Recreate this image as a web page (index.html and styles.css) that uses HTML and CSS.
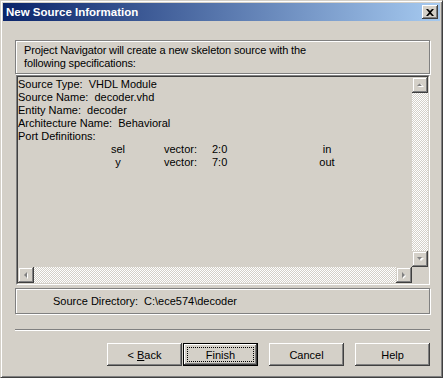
FILE: index.html
```html
<!DOCTYPE html>
<html>
<head>
<meta charset="utf-8">
<link rel="stylesheet" href="styles.css">
</head>
<body>
<div class="window">
  <div class="titlebar">
    <span class="title">New Source Information</span>
    <span class="close"><svg width="8" height="7" viewBox="0 0 8 7"><path d="M0 0h2l2 2 2-2h2L5 3.5 8 7H6L4 5 2 7H0l3-3.5z" fill="#000"/></svg></span>
  </div>
  <div class="content">
    <div class="etched intro">
      <p>Project Navigator will create a new skeleton source with the</p>
      <p>following specifications:</p>
    </div>
    <div class="listbox">
      <div class="listinner">
        <div class="text">
          <p>Source Type:&nbsp; VHDL Module</p>
          <p>Source Name:&nbsp; decoder.vhd</p>
          <p>Entity Name:&nbsp; decoder</p>
          <p>Architecture Name:&nbsp; Behavioral</p>
          <p>Port Definitions:</p>
          <div class="port"><span class="pname">sel</span><span class="ptype">vector:</span><span class="prange">2:0</span><span class="pdir">in</span></div>
          <div class="port"><span class="pname">y</span><span class="ptype">vector:</span><span class="prange">7:0</span><span class="pdir">out</span></div>
        </div>
        <div class="vscroll">
          <span class="sbtn"><svg width="7" height="5" viewBox="0 0 7 5"><path d="M1 4h6L4 1z" fill="#fff"/><path d="M0 3h5L2.5 0.5z" fill="#808080"/></svg></span>
          <span class="track"></span>
          <span class="sbtn"><svg width="7" height="5" viewBox="0 0 7 5"><path d="M1 1h6L4 4z" fill="#fff"/><path d="M0 0h5L2.5 3z" fill="#808080"/></svg></span>
        </div>
        <div class="hscroll">
          <span class="sbtn"><svg width="5" height="7" viewBox="0 0 5 7"><path d="M4 1v6L1 4z" fill="#fff"/><path d="M3 0v6L0 3z" fill="#808080"/></svg></span>
          <span class="track"></span>
          <span class="sbtn"><svg width="5" height="7" viewBox="0 0 5 7"><path d="M1 1v6l3-3z" fill="#fff"/><path d="M0 0v6l3-3z" fill="#808080"/></svg></span>
        </div>
        <div class="corner"></div>
      </div>
    </div>
    <div class="etched dirbox">
      <span class="dirlabel">Source Directory:</span>
      <span>C:\ece574\decoder</span>
    </div>
    <div class="separator"></div>
    <div class="buttons">
      <div class="pair">
        <div class="btn">&lt;&nbsp;<u>B</u>ack</div>
        <div class="btn default"><span class="focus">Finish</span></div>
      </div>
      <div class="btn">Cancel</div>
      <div class="btn">Help</div>
    </div>
  </div>
</div>
</body>
</html>
```
FILE: styles.css
```css
* { box-sizing: border-box; margin: 0; padding: 0; }
html, body { width: 443px; height: 378px; overflow: hidden; background: #d4d0c8; }
body { font-family: "Liberation Sans", Arial, sans-serif; font-size: 11px; color: #000; }

.window {
  width: 443px; height: 378px;
  display: flex; flex-direction: column;
  border: 1px solid; border-color: #d4d0c8 #404040 #404040 #d4d0c8;
  box-shadow: inset 1px 1px #fff, inset -1px -1px #808080;
  padding: 2px;
  background: #d4d0c8;
}

.titlebar {
  height: 18px; flex: none;
  display: flex; align-items: center; justify-content: space-between;
  padding: 0 2px 0 3px;
  background: linear-gradient(to right, #0a246a, #a6caf0);
  color: #fff; font-weight: bold; font-size: 11.5px;
}
.close {
  width: 16px; height: 14px;
  display: flex; align-items: center; justify-content: center;
  background: #d4d0c8;
  box-shadow: inset -1px -1px #404040, inset 1px 1px #fff, inset -2px -2px #808080;
}

.content { flex: 1; display: flex; flex-direction: column; padding: 19px 10px 0 12px; }

.etched { border: 1px solid #808080; box-shadow: inset 1px 1px #fff, 1px 1px #fff; }

.intro { height: 34px; padding: 3px 0 0 8px; line-height: 13px; letter-spacing: -0.13px; }

.listbox {
  margin: 1px 0 0 1px; height: 210px;
  border: 1px solid; border-color: #808080 #fff #fff #808080;
}
.listinner {
  height: 100%;
  border: 1px solid; border-color: #404040 #d4d0c8 #d4d0c8 #404040;
  display: grid; grid-template-columns: 1fr 16px; grid-template-rows: 1fr 16px;
}
.text { padding: 1px 0 0 0; line-height: 13px; }
.port { display: flex; }
.pname { width: 40px; margin-left: 80px; margin-right: 26px; text-align: center; }
.ptype { width: 48px; }
.prange { width: 80px; }
.pdir { width: 70px; text-align: center; }

.vscroll { display: flex; flex-direction: column; }
.hscroll { display: flex; }
.track { flex: 1; background: repeating-conic-gradient(#fff 0 25%, #d4d0c8 0 50%) 0 0 / 2px 2px; }
.sbtn {
  width: 16px; height: 16px; flex: none;
  display: flex; align-items: center; justify-content: center;
  background: #d4d0c8;
  box-shadow: inset -1px -1px #404040, inset 1px 1px #d4d0c8, inset -2px -2px #808080, inset 2px 2px #fff;
}
.corner { background: #d4d0c8; }

.dirbox { margin-top: 3px; height: 26px; display: flex; align-items: center; padding-left: 37px; }
.dirlabel { width: 91px; }

.separator { margin-top: 15px; height: 2px; border-top: 1px solid #808080; border-bottom: 1px solid #fff; }

.buttons { margin-top: 12px; display: flex; justify-content: flex-end; gap: 11px; }
.pair { display: flex; gap: 1px; }
.btn {
  width: 75px; height: 23px;
  display: flex; align-items: center; justify-content: center;
  box-shadow: inset -1px -1px #404040, inset 1px 1px #fff, inset -2px -2px #808080, inset 2px 2px #d4d0c8;
}
.btn.default { border: 1px solid #000; padding: 3px; }
.focus { flex: 1; align-self: stretch; display: flex; align-items: center; justify-content: center; border: 1px dotted #000; }
```
